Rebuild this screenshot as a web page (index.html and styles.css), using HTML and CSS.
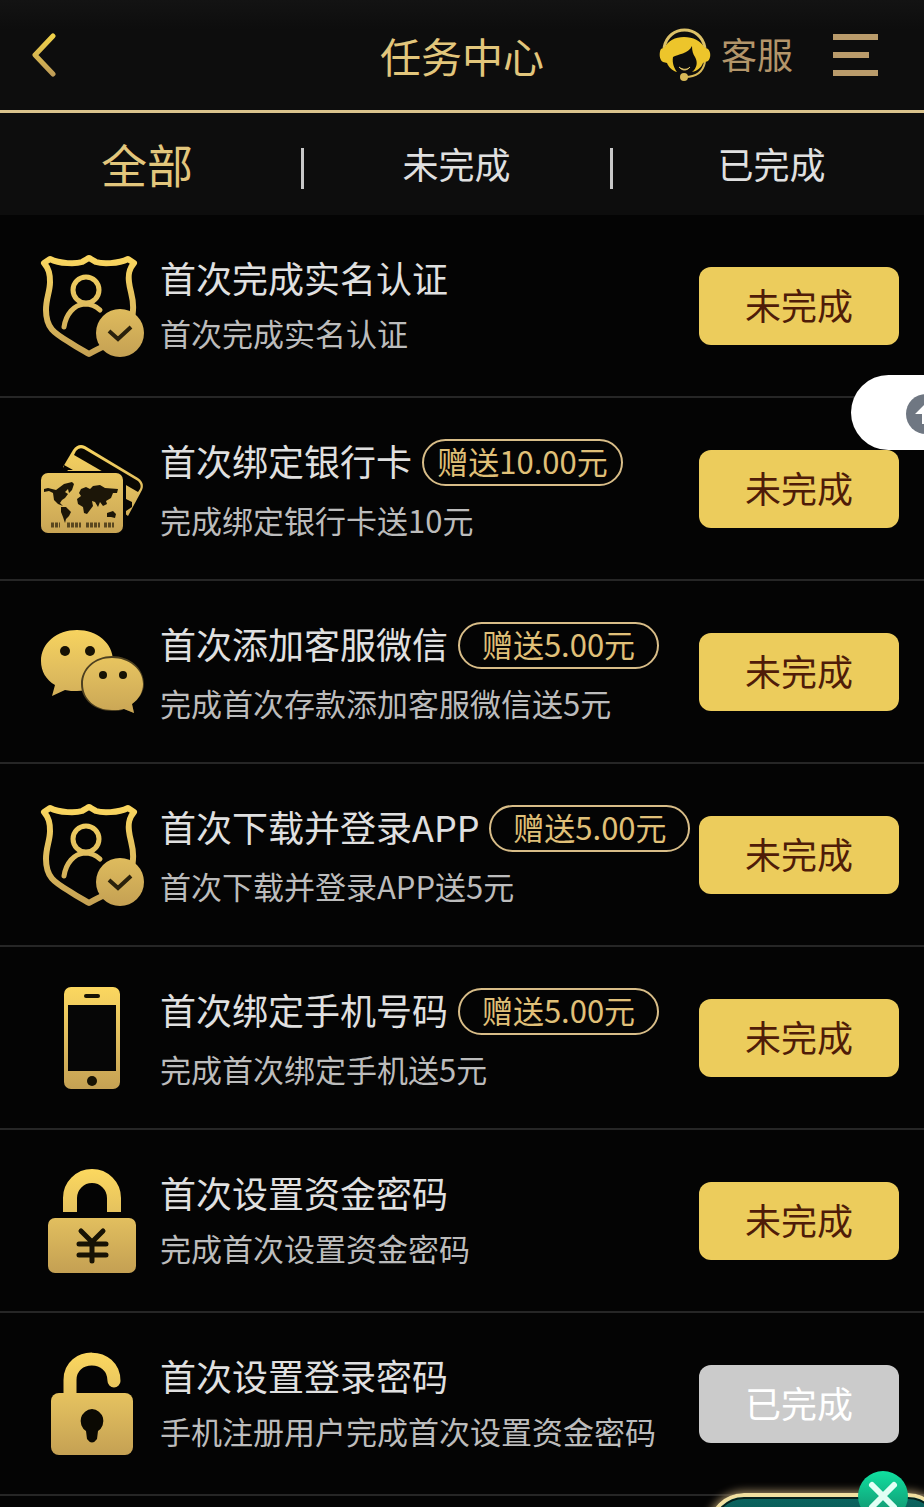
FILE: index.html
```html
<!DOCTYPE html>
<html lang="zh-CN">

<head>
  <meta charset="UTF-8">
  <meta name="viewport" content="width=device-width, initial-scale=1.0">
  <title>任务中心</title>
  <link rel="stylesheet" href="styles.css">
</head>

<body>
  <!-- shared icons -->
  <svg class="sprite" aria-hidden="true">
    <defs>
      <linearGradient id="gold" gradientUnits="userSpaceOnUse" x1="0" y1="0" x2="0" y2="104">
        <stop offset="0" stop-color="#fcd85f" />
        <stop offset="0.5" stop-color="#e0bd5e" />
        <stop offset="1" stop-color="#c4a053" />
      </linearGradient>
      <linearGradient id="arrow" gradientUnits="userSpaceOnUse" x1="0" y1="0" x2="0" y2="44">
        <stop offset="0" stop-color="#f3d548" />
        <stop offset="1" stop-color="#bd9a58" />
      </linearGradient>
      <linearGradient id="teal" x1="0" y1="0" x2="0" y2="1">
        <stop offset="0" stop-color="#10e0a0" />
        <stop offset="1" stop-color="#128a6a" />
      </linearGradient>
    </defs>
    <symbol id="shield" viewBox="0 0 104 104">
      <path d="M4 9 L10 5 C20 10 36 10 42 8 C46 6 47 5 49 4 C51 5 52 6 56 8 C62 10 78 10 88 5 L94 9 C89 15 88 20 89 28 C90 38 94 44 93 56 C92 78 86 82 71 89 C60 94 54 97 49 100 C44 97 38 94 29 88 C14 79 6 74 6 56 C6 44 10 38 10 28 C10 20 9 15 4 9 Z" fill="none" stroke="url(#gold)" stroke-width="6" stroke-linejoin="round" />
      <circle cx="46" cy="36" r="13" fill="none" stroke="url(#gold)" stroke-width="5" />
      <path d="M24 73 C26 60 34 51 44 50 C51 50 57 53 60 56" fill="none" stroke="url(#gold)" stroke-width="5" stroke-linecap="round" />
      <circle cx="80" cy="79" r="24" fill="url(#gold)" />
      <path d="M69 77 L78 85 L91 73" fill="none" stroke="#2a210c" stroke-width="4" />
    </symbol>
    <symbol id="cards" viewBox="0 0 104 104">
      <path d="M23 30 L33 13 Q38 6 45 9 L98 41 Q105 46 102 53 L88 79 Z" fill="url(#gold)" />
      <path d="M36 14 Q39 10 44 12 L98 44 Q102 48 100 52 L98 55 L34 18 Z" fill="#080602" />
      <path d="M24 28 L33 33 L23 33 Z M86 62 L92 65 L92 70 L86 74 Z" fill="#080602" />
      <rect x="-1" y="34" width="87" height="64" rx="9" fill="#050505" />
      <rect x="1" y="36" width="82" height="60" rx="7" fill="url(#gold)" />
      <g fill="#1c1608">
        <path d="M4 52 L8 51 L16 53 L20 50 L24 47 L32 45 L34 47 L32 53 L29 56 L28 52 L25 55 L28 57 L25 61 L22 63 L20 66 L23 69 L18 67 L14 63 L13 56 L9 54 L4 55 Z" />
        <path d="M21 70 L26 70 L31 75 L29 79 L26 82 L25 86 L23 80 L21 75 Z" />
        <path d="M39 56 L41 52 L46 50 L50 52 L53 49 L60 48 L65 51 L78 52 L77 56 L73 56 L71 61 L66 64 L67 67 L63 69 L60 65 L58 70 L55 65 L52 64 L53 69 L50 73 L47 77 L44 76 L43 70 L38 67 L37 62 L41 59 Z" />
        <path d="M67 76 L73 74 L76 77 L75 81 L71 80 L67 80 Z" />
      </g>
      <path d="M11 88 H20 M27 88 H41 M46 88 H60 M64 88 H74" stroke="#5a4820" stroke-width="5" stroke-dasharray="3 1" />
    </symbol>
    <symbol id="wechat" viewBox="0 0 104 104">
      <path d="M37 10 C57 10 73 23 73 41 C73 59 57 71 37 71 C33 71 29 71 25 70 L12 76 L15 65 C6 60 1 51 1 41 C1 23 17 10 37 10 Z" fill="url(#gold)" />
      <path d="M72 36 C90 36 104 48 104 64 C104 72 99 79 92 84 L94 93 L84 89 C80 91 77 91 72 91 C55 91 41 80 41 64 C41 48 55 36 72 36 Z" fill="#4d4020" />
      <path d="M72 38 C89 38 103 49 103 64 C103 72 99 79 92 84 L94 93 L84 89 C80 90 77 90 72 90 C55 90 43 79 43 64 C43 49 55 38 72 38 Z" fill="url(#gold)" />
      <g fill="#171204">
        <circle cx="25" cy="31" r="5" />
        <circle cx="50" cy="31" r="5" />
        <circle cx="63" cy="55" r="4" />
        <circle cx="83" cy="55" r="4" />
      </g>
    </symbol>
    <symbol id="phone" viewBox="0 0 104 104">
      <rect x="24" y="1" width="56" height="102" rx="7" fill="url(#gold)" />
      <rect x="28" y="19" width="48" height="66" fill="#060606" />
      <rect x="44" y="8" width="16" height="4" rx="2" fill="#171204" />
      <circle cx="52" cy="95" r="5" fill="#171204" />
    </symbol>
    <symbol id="lock" viewBox="0 0 104 104">
      <path d="M30 43 V29 A22 22 0 0 1 74 29 V43" fill="none" stroke="url(#gold)" stroke-width="14" />
      <rect x="8" y="49" width="88" height="55" rx="7" fill="url(#gold)" />
      <path d="M41 62 L52 73 L63 62 M39 75 H66 M39 86 H66 M52 73 V92" fill="none" stroke="#171204" stroke-width="5" stroke-linecap="round" />
    </symbol>
    <symbol id="unlock" viewBox="0 0 104 104">
      <path d="M30 45 V28 C30 0 74 0 74 29" fill="none" stroke="url(#gold)" stroke-width="13" stroke-linecap="round" />
      <rect x="11" y="41" width="82" height="62" rx="8" fill="url(#gold)" />
      <path d="M52 57 A12 12 0 0 1 58 79 L57 87 Q52 94 47 87 L46 79 A12 12 0 0 1 52 57 Z" fill="#0b0903" />
    </symbol>
  </svg>

  <header class="header">
    <button class="back" type="button" aria-label="返回">
      <svg width="26" height="44" viewBox="0 0 26 44">
        <path d="M22 3 L4 22 L22 41" fill="none" stroke="url(#arrow)" stroke-width="5" stroke-linecap="round" stroke-linejoin="round" />
      </svg>
    </button>
    <h1 class="title">任务中心</h1>
    <div class="headerRight">
      <a href="#" class="service">
        <svg width="52" height="54" viewBox="0 0 52 54">
          <path d="M5 20 C9 -4 42 -4 46 20" fill="none" stroke="#dcc168" stroke-width="3" />
          <path d="M6 19 C9 13 16 9 25 9 C34 9 42 13 45 19 L49 21 C52 24 52 30 49 33 L44 35 C42 40 38 43 33 44 C38 40 39 34 36 29 C34 26 33 23 33 18 C29 26 19 26 14 29 C13 35 15 40 18 44 C13 43 9 38 8 35 L4 34 C0 32 0 24 2 21 Z" fill="#edc52b" />
          <path d="M20 39 C24 42 28 42 31 39 C28 43 23 43 20 39 Z" fill="#dcc168" stroke="#dcc168" />
          <path d="M46 34 C44 44 37 49 26 49" fill="none" stroke="#d8b958" stroke-width="2" />
          <circle cx="25" cy="49" r="4" fill="#d8b958" />
        </svg>
        <span>客服</span>
      </a>
      <button class="menu" type="button" aria-label="菜单">
        <svg width="45" height="42" viewBox="0 0 45 42">
          <path d="M0 3 H45 M0 21 H36 M0 39 H45" stroke="#b99b6b" stroke-width="6" />
        </svg>
      </button>
    </div>
  </header>

  <nav class="tabs">
    <a href="#" class="tab active">全部</a>
    <span class="line"></span>
    <a href="#" class="tab">未完成</a>
    <span class="line"></span>
    <a href="#" class="tab">已完成</a>
  </nav>

  <ul class="tasks">
    <li class="task">
      <svg class="icon"><use href="#shield" /></svg>
      <div class="info">
        <h2 class="name">首次完成实名认证</h2>
        <p class="desc">首次完成实名认证</p>
      </div>
      <button class="status" type="button">未完成</button>
    </li>
    <li class="task">
      <svg class="icon"><use href="#cards" /></svg>
      <div class="info">
        <h2 class="name gift">首次绑定银行卡<span class="badge">赠送10.00元</span></h2>
        <p class="desc">完成绑定银行卡送10元</p>
      </div>
      <button class="status" type="button">未完成</button>
    </li>
    <li class="task">
      <svg class="icon"><use href="#wechat" /></svg>
      <div class="info">
        <h2 class="name gift">首次添加客服微信<span class="badge">赠送5.00元</span></h2>
        <p class="desc">完成首次存款添加客服微信送5元</p>
      </div>
      <button class="status" type="button">未完成</button>
    </li>
    <li class="task">
      <svg class="icon"><use href="#shield" /></svg>
      <div class="info">
        <h2 class="name gift">首次下载并登录APP<span class="badge">赠送5.00元</span></h2>
        <p class="desc">首次下载并登录APP送5元</p>
      </div>
      <button class="status" type="button">未完成</button>
    </li>
    <li class="task">
      <svg class="icon"><use href="#phone" /></svg>
      <div class="info">
        <h2 class="name gift">首次绑定手机号码<span class="badge">赠送5.00元</span></h2>
        <p class="desc">完成首次绑定手机送5元</p>
      </div>
      <button class="status" type="button">未完成</button>
    </li>
    <li class="task">
      <svg class="icon"><use href="#lock" /></svg>
      <div class="info">
        <h2 class="name">首次设置资金密码</h2>
        <p class="desc">完成首次设置资金密码</p>
      </div>
      <button class="status" type="button">未完成</button>
    </li>
    <li class="task">
      <svg class="icon"><use href="#unlock" /></svg>
      <div class="info">
        <h2 class="name">首次设置登录密码</h2>
        <p class="desc">手机注册用户完成首次设置资金密码</p>
      </div>
      <button class="status done" type="button">已完成</button>
    </li>
  </ul>

  <!-- floating buttons -->
  <button class="floatTop" type="button" aria-label="回到顶部">
    <svg width="40" height="40" viewBox="0 0 40 40">
      <circle cx="20" cy="20" r="20" fill="#6f7782" />
      <path d="M20 9 L31 20 H24 V30 H16 V20 H9 Z" fill="#fff" />
    </svg>
  </button>

  <div class="promo">
    <button class="promoClose" type="button" aria-label="关闭">
      <svg width="52" height="52" viewBox="0 0 52 52">
        <circle cx="26" cy="26" r="25" fill="url(#teal)" />
        <path d="M15 15 L37 37 M37 15 L15 37" stroke="#e2fff5" stroke-width="6" stroke-linecap="round" />
      </svg>
    </button>
  </div>
</body>

</html>
```
FILE: styles.css
```css
* {
  box-sizing: border-box;
}

body {
  margin: 0;
  min-height: 100vh;
  font-family: "Noto Sans CJK SC", sans-serif;
  background-color: #040404;
  color: #e0e0e0;
}

button {
  padding: 0;
  border: none;
  background: none;
  font-family: inherit;
  cursor: pointer;
}

a {
  color: inherit;
  text-decoration: none;
}

svg {
  display: block;
}

.sprite {
  position: absolute;
  width: 0;
  height: 0;
}

.header {
  display: grid;
  grid-template-columns: 1fr auto 1fr;
  align-items: center;
  height: 113px;
  padding: 0 31px;
  background: linear-gradient(#131313, #0d0d0d 30px);
  border-bottom: 3px solid #d9c38c;
}

.back {
  justify-self: start;
}

.title {
  margin: 0;
  font-size: 41px;
  font-weight: 400;
  line-height: 60px;
  color: #e2c67c;
}

.headerRight {
  display: flex;
  align-items: center;
  justify-content: flex-end;
  gap: 40px;
  padding-right: 15px;
}

.service {
  display: flex;
  align-items: center;
  gap: 10px;
  font-size: 36px;
  line-height: 48px;
  color: #b3956a;
}

.service span {
  padding-bottom: 4px;
}

.tabs {
  display: grid;
  grid-template-columns: 294fr 16px 293fr 16px 305fr;
  align-items: center;
  height: 102px;
  background-color: #0d0d0d;
}

.tab {
  padding-bottom: 2px;
  text-align: center;
  font-size: 36px;
  line-height: 60px;
}

.tab.active {
  font-size: 46px;
  color: #e2c67c;
}

.tabs .line {
  justify-self: center;
  width: 3px;
  height: 41px;
  margin-top: 8px;
  background-color: #c8c8c8;
}

.tasks {
  margin: 0;
  padding: 0;
  list-style: none;
}

.task {
  display: flex;
  align-items: center;
  height: 183px;
  padding: 0 25px 0 40px;
  border-bottom: 2px solid #262626;
}

.icon {
  flex: none;
  width: 104px;
  height: 104px;
}

.info {
  flex: 1;
  min-width: 0;
  padding: 0 0 6px 16px;
  white-space: nowrap;
}

.name {
  display: flex;
  align-items: center;
  gap: 10px;
  height: 52px;
  margin: 0 0 8px;
  font-size: 36px;
  font-weight: 400;
  line-height: 52px;
}

.name.gift {
  height: 60px;
}

.badge {
  display: flex;
  align-items: center;
  justify-content: center;
  width: 201px;
  height: 47px;
  margin-top: 6px;
  padding-bottom: 3px;
  border: 2px solid #d8bd88;
  border-radius: 24px;
  font-size: 31px;
  line-height: 40px;
  color: #e0c078;
}

.desc {
  margin: 0;
  font-size: 31px;
  line-height: 44px;
  color: #bcbcbc;
}

.status {
  flex: none;
  width: 200px;
  height: 78px;
  padding-bottom: 3px;
  border-radius: 12px;
  background-color: #eccc5c;
  font-size: 36px;
  color: #4f1c08;
}

.status.done {
  background-color: #cbcbcb;
  color: #fff;
}

.floatTop {
  position: fixed;
  top: 375px;
  right: -50px;
  width: 123px;
  height: 75px;
  padding-left: 55px;
  padding-top: 2px;
  border-radius: 38px;
  background-color: #fff;
}

.promo {
  position: fixed;
  right: -20px;
  bottom: -66px;
  width: 236px;
  height: 80px;
  border: 4px solid #f1dfa0;
  border-radius: 36px;
  background: linear-gradient(#0b6560, #06403c);
  box-shadow: 0 0 8px 2px #9a8560, inset 0 0 0 2px #06201c;
}

.promoClose {
  position: absolute;
  top: -27px;
  right: 31px;
}
```
